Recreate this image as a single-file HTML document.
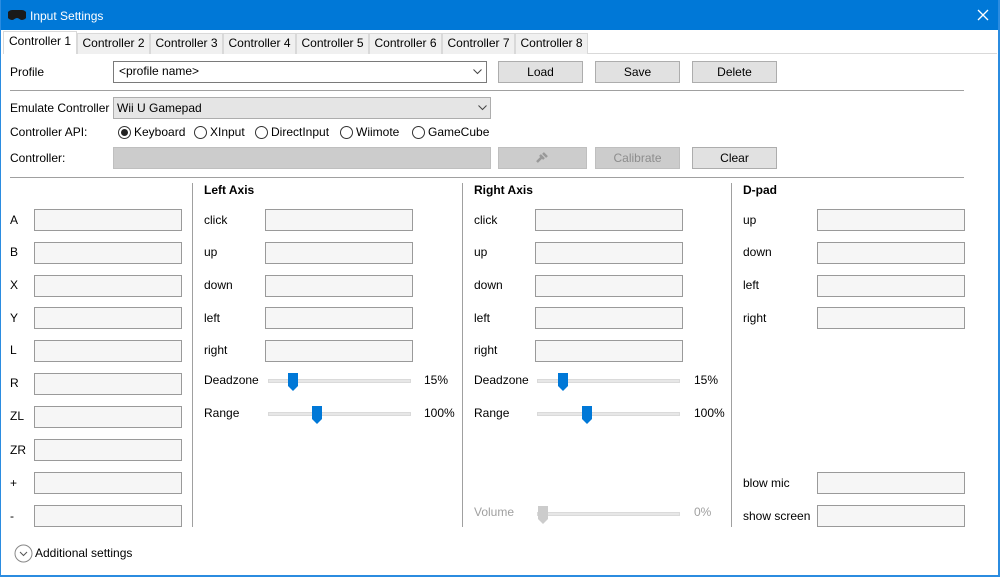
<!DOCTYPE html>
<html><head><meta charset="utf-8"><style>
*{margin:0;padding:0;box-sizing:border-box}
body{width:1000px;height:577px;overflow:hidden;background:#fff;font-family:"Liberation Sans",sans-serif;font-size:12px;color:#000;position:relative}
.a{position:absolute}
.t{position:absolute;line-height:14px;white-space:nowrap}
.tb{position:absolute;width:148px;height:22px;background:#f6f6f6;border:1px solid #9a9a9a}
.btn{position:absolute;height:22px;background:#e1e1e1;border:1px solid #adadad;text-align:center;line-height:20px}
.dis{background:#cccccc;border-color:#bfbfbf;color:#8d8d8d}
.tab{position:absolute;top:33px;height:21px;background:#f0f0f0;border:1px solid #d9d9d9;border-bottom:none;line-height:19px;text-align:center}
.hl{position:absolute;height:1px;background:#a0a0a0}
.vl{position:absolute;width:1px;background:#a0a0a0}
.rad{position:absolute;width:13px;height:13px;border:1px solid #333;border-radius:50%;top:126px}
.track{position:absolute;height:4px;background:#e7e7e7;border:1px solid #dadada}
.thumb{position:absolute;width:10px;height:18px}
</style></head><body>
<div class="a" style="left:0;top:0;width:1000px;height:30px;background:#0078d7"></div>
<div class="a" style="left:0;top:0;width:1px;height:577px;background:#2b8ce0"></div>
<div class="a" style="left:998px;top:0;width:2px;height:577px;background:#2b8ce0"></div>
<div class="a" style="left:0;top:575px;width:1000px;height:2px;background:#2b8ce0"></div>
<svg class="a" style="left:8px;top:10px" width="18" height="10" viewBox="0 0 18 10"><path d="M4 0h10a4 4 0 0 1 0 10c-2 0-3-2-5-2s-3 2-5 2A4 4 0 0 1 4 0z" fill="#1a1a1a"/></svg>
<div class="t" style="left:30px;top:9px;color:#fff">Input Settings</div>
<svg class="a" style="left:977px;top:9px" width="12" height="12"><path d="M1 1L11 11M11 1L1 11" stroke="#fff" stroke-width="1.3"/></svg>

<div class="a" style="left:3px;top:53px;width:994px;height:1px;background:#d9d9d9"></div>
<div class="tab" style="left:3px;top:31px;width:74px;height:23px;background:#fff;border-color:#d9d9d9">Controller 1</div>
<div class="tab" style="left:77px;width:73px">Controller 2</div>
<div class="tab" style="left:150px;width:73px">Controller 3</div>
<div class="tab" style="left:223px;width:73px">Controller 4</div>
<div class="tab" style="left:296px;width:73px">Controller 5</div>
<div class="tab" style="left:369px;width:73px">Controller 6</div>
<div class="tab" style="left:442px;width:73px">Controller 7</div>
<div class="tab" style="left:515px;width:73px">Controller 8</div>

<div class="t" style="left:10px;top:65px">Profile</div>
<div class="a" style="left:113px;top:61px;width:374px;height:22px;border:1px solid #7a7a7a;background:#fff"></div>
<div class="t" style="left:119px;top:64px">&lt;profile name&gt;</div>
<svg class="a" style="left:473px;top:69px" width="9" height="6"><path d="M0.5 0.5L4.5 4.5L8.5 0.5" stroke="#444" fill="none"/></svg>
<div class="btn" style="left:498px;top:61px;width:85px">Load</div>
<div class="btn" style="left:595px;top:61px;width:85px">Save</div>
<div class="btn" style="left:692px;top:61px;width:85px">Delete</div>
<div class="hl" style="left:10px;top:90px;width:954px"></div>

<div class="t" style="left:10px;top:101px">Emulate Controller</div>
<div class="a" style="left:113px;top:97px;width:378px;height:22px;border:1px solid #adadad;background:#e5e5e5"></div>
<div class="t" style="left:117px;top:101px">Wii U Gamepad</div>
<svg class="a" style="left:478px;top:105px" width="9" height="6"><path d="M0.5 0.5L4.5 4.5L8.5 0.5" stroke="#444" fill="none"/></svg>

<div class="t" style="left:10px;top:125px">Controller API:</div>
<div class="rad" style="left:118px"><div class="a" style="left:2px;top:2px;width:7px;height:7px;border-radius:50%;background:#222"></div></div>
<div class="t" style="left:134px;top:125px">Keyboard</div>
<div class="rad" style="left:194px"></div><div class="t" style="left:210px;top:125px">XInput</div>
<div class="rad" style="left:255px"></div><div class="t" style="left:271px;top:125px">DirectInput</div>
<div class="rad" style="left:340px"></div><div class="t" style="left:356px;top:125px">Wiimote</div>
<div class="rad" style="left:412px"></div><div class="t" style="left:428px;top:125px">GameCube</div>

<div class="t" style="left:10px;top:151px">Controller:</div>
<div class="a dis" style="left:113px;top:147px;width:378px;height:22px;border:1px solid #bfbfbf;background:#cccccc"></div>
<div class="btn dis" style="left:498px;top:147px;width:89px"></div>
<svg class="a" style="left:535px;top:151px" width="14" height="13"><path d="M2 11L7 6M5 4l4 4M8 2l4 4" stroke="#999" stroke-width="2.5"/></svg>
<div class="btn dis" style="left:595px;top:147px;width:85px">Calibrate</div>
<div class="btn" style="left:692px;top:147px;width:85px">Clear</div>
<div class="hl" style="left:10px;top:177px;width:954px"></div>

<div class="vl" style="left:192px;top:183px;height:344px"></div>
<div class="vl" style="left:462px;top:183px;height:344px"></div>
<div class="vl" style="left:731px;top:183px;height:344px"></div>

<!-- left col -->
<div class="t" style="left:10px;top:213px">A</div><div class="tb" style="left:34px;top:209px"></div>
<div class="t" style="left:10px;top:245px">B</div><div class="tb" style="left:34px;top:242px"></div>
<div class="t" style="left:10px;top:278px">X</div><div class="tb" style="left:34px;top:275px"></div>
<div class="t" style="left:10px;top:311px">Y</div><div class="tb" style="left:34px;top:307px"></div>
<div class="t" style="left:10px;top:343px">L</div><div class="tb" style="left:34px;top:340px"></div>
<div class="t" style="left:10px;top:376px">R</div><div class="tb" style="left:34px;top:373px"></div>
<div class="t" style="left:10px;top:409px">ZL</div><div class="tb" style="left:34px;top:406px"></div>
<div class="t" style="left:10px;top:443px">ZR</div><div class="tb" style="left:34px;top:439px"></div>
<div class="t" style="left:10px;top:476px">+</div><div class="tb" style="left:34px;top:472px"></div>
<div class="t" style="left:10px;top:509px">-</div><div class="tb" style="left:34px;top:505px"></div>

<!-- left axis -->
<div class="t" style="left:204px;top:183px;font-weight:bold">Left Axis</div>
<div class="t" style="left:204px;top:213px">click</div><div class="tb" style="left:265px;top:209px"></div>
<div class="t" style="left:204px;top:245px">up</div><div class="tb" style="left:265px;top:242px"></div>
<div class="t" style="left:204px;top:278px">down</div><div class="tb" style="left:265px;top:275px"></div>
<div class="t" style="left:204px;top:311px">left</div><div class="tb" style="left:265px;top:307px"></div>
<div class="t" style="left:204px;top:343px">right</div><div class="tb" style="left:265px;top:340px"></div>
<div class="t" style="left:204px;top:373px">Deadzone</div>
<div class="track" style="left:268px;top:379px;width:143px"></div>
<svg class="thumb" style="left:288px;top:373px" viewBox="0 0 10 18"><path d="M0 0h10v13l-5 5l-5-5z" fill="#0078d7"/></svg>
<div class="t" style="left:424px;top:373px">15%</div>
<div class="t" style="left:204px;top:406px">Range</div>
<div class="track" style="left:268px;top:412px;width:143px"></div>
<svg class="thumb" style="left:312px;top:406px" viewBox="0 0 10 18"><path d="M0 0h10v13l-5 5l-5-5z" fill="#0078d7"/></svg>
<div class="t" style="left:424px;top:406px">100%</div>

<!-- right axis -->
<div class="t" style="left:474px;top:183px;font-weight:bold">Right Axis</div>
<div class="t" style="left:474px;top:213px">click</div><div class="tb" style="left:535px;top:209px"></div>
<div class="t" style="left:474px;top:245px">up</div><div class="tb" style="left:535px;top:242px"></div>
<div class="t" style="left:474px;top:278px">down</div><div class="tb" style="left:535px;top:275px"></div>
<div class="t" style="left:474px;top:311px">left</div><div class="tb" style="left:535px;top:307px"></div>
<div class="t" style="left:474px;top:343px">right</div><div class="tb" style="left:535px;top:340px"></div>
<div class="t" style="left:474px;top:373px">Deadzone</div>
<div class="track" style="left:537px;top:379px;width:143px"></div>
<svg class="thumb" style="left:558px;top:373px" viewBox="0 0 10 18"><path d="M0 0h10v13l-5 5l-5-5z" fill="#0078d7"/></svg>
<div class="t" style="left:694px;top:373px">15%</div>
<div class="t" style="left:474px;top:406px">Range</div>
<div class="track" style="left:537px;top:412px;width:143px"></div>
<svg class="thumb" style="left:582px;top:406px" viewBox="0 0 10 18"><path d="M0 0h10v13l-5 5l-5-5z" fill="#0078d7"/></svg>
<div class="t" style="left:694px;top:406px">100%</div>
<div class="t" style="left:474px;top:505px;color:#a0a0a0">Volume</div>
<div class="track" style="left:537px;top:512px;width:143px"></div>
<svg class="thumb" style="left:538px;top:506px" viewBox="0 0 10 18"><path d="M0 0h10v13l-5 5l-5-5z" fill="#cccccc"/></svg>
<div class="t" style="left:694px;top:505px;color:#a0a0a0">0%</div>

<!-- dpad -->
<div class="t" style="left:743px;top:183px;font-weight:bold">D-pad</div>
<div class="t" style="left:743px;top:213px">up</div><div class="tb" style="left:817px;top:209px"></div>
<div class="t" style="left:743px;top:245px">down</div><div class="tb" style="left:817px;top:242px"></div>
<div class="t" style="left:743px;top:278px">left</div><div class="tb" style="left:817px;top:275px"></div>
<div class="t" style="left:743px;top:311px">right</div><div class="tb" style="left:817px;top:307px"></div>
<div class="t" style="left:743px;top:476px">blow mic</div><div class="tb" style="left:817px;top:472px"></div>
<div class="t" style="left:743px;top:509px">show screen</div><div class="tb" style="left:817px;top:505px"></div>

<svg class="a" style="left:14px;top:544px" width="19" height="19"><circle cx="9.5" cy="9.5" r="8.5" fill="none" stroke="#888"/><path d="M6 8l3.5 3.5L13 8" stroke="#555" fill="none"/></svg>
<div class="t" style="left:35px;top:546px">Additional settings</div>
</body></html>
